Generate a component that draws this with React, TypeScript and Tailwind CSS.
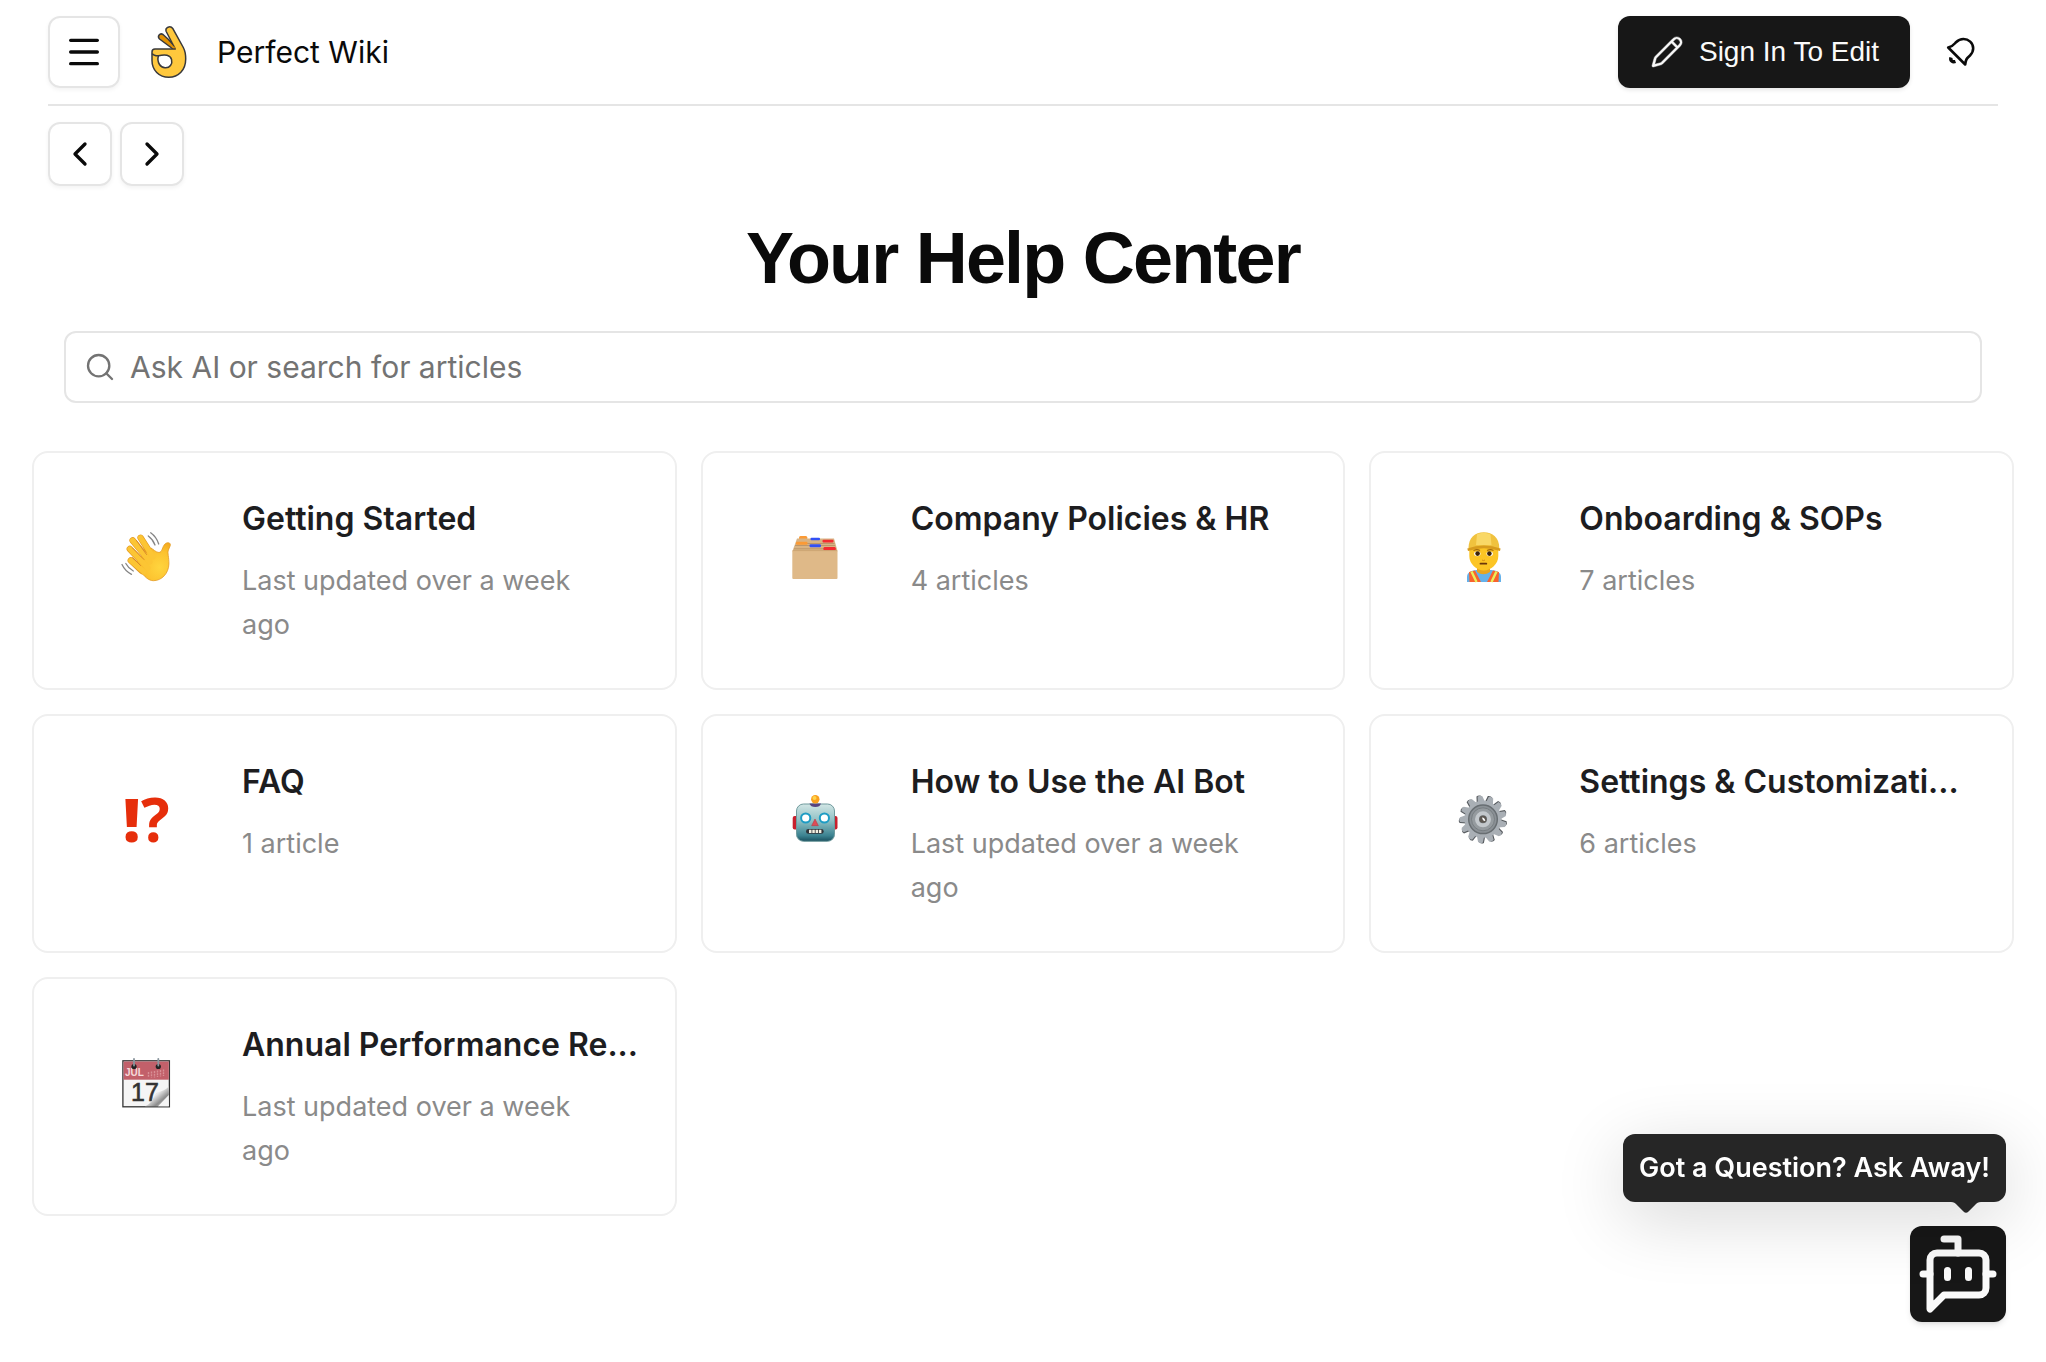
import type { ReactNode } from 'react';
import { ChevronLeft, ChevronRight, Menu, Search } from 'lucide-react';

interface Topic {
  title: string;
  note: string;
  icon: ReactNode;
}

function Emoji({ children }: { children: ReactNode }) {
  return (
    <svg viewBox="0 0 52 52" className="mt-9 size-[52px] shrink-0 overflow-visible" aria-hidden="true">
      {children}
    </svg>
  );
}

function WaveIcon() {
  return (
    <Emoji>
      <defs>
        <radialGradient id="skin" cx="0.7" cy="0.65" r="0.7">
          <stop offset="0" stopColor="#ffd53e" />
          <stop offset="0.6" stopColor="#fcc22f" />
          <stop offset="1" stopColor="#f3a81f" />
        </radialGradient>
      </defs>
      <g stroke="#e39a22" strokeLinecap="round" strokeWidth="6.4">
        <path d="M20.6 6.8 31 23M12.6 9.4 28 28M9.8 18 25 34M10.8 29.5 22 40" />
      </g>
      <path
        d="M20 40C25 46 28.5 49.7 33.5 49.7C42 49.7 48.7 42 48.9 33C49 26 47.3 22 48.4 19L50.3 14.5C51 11.5 47.3 10.8 45 13C42 16 42.5 21 39 21.5C36 21.5 33 18 31 17L14 33Z"
        fill="url(#skin)"
        stroke="#e39a22"
        strokeWidth="0.8"
      />
      <g stroke="#fcc534" strokeLinecap="round" strokeWidth="5.2">
        <path d="M20.6 6.8 33 26M12.6 9.4 30 31M9.8 18 28 37M10.8 29.5 24 41" />
      </g>
      <path
        d="M16.5 9.5 26.5 23.5M12.5 17 24 28.5M12.5 26.5 20.5 34.5"
        stroke="#d98b2b"
        strokeWidth="1"
        strokeLinecap="round"
      />
      <path
        d="M30.7 1.8Q36.5 6 38.7 13M28.3 5Q33 8.5 35 14M2 33.5Q5 40 11.5 43.3M5.8 32.5Q8.5 37.5 13.3 40"
        fill="none"
        stroke="#858585"
        strokeWidth="1.3"
        strokeLinecap="round"
      />
    </Emoji>
  );
}

function FolderIcon() {
  return (
    <Emoji>
      <rect x="10" y="5" width="8.3" height="4" rx="1.5" fill="#fb9a35" />
      <path d="M8 7.5H45L48.5 20H3.5Z" fill="#d8b384" />
      <rect x="21.5" y="6.7" width="9.5" height="2.6" rx="1" fill="#3250f5" />
      <rect x="33.5" y="8.8" width="11" height="2.8" rx="1" fill="#f32b31" />
      <path d="M7 12.5H45.500M6 14.5H46M5 17.8H47" stroke="#b99468" strokeWidth="0.9" />
      <rect x="7" y="10.7" width="11.5" height="3" rx="1.2" fill="#fb9a35" />
      <rect x="20.5" y="13.3" width="11.5" height="2.9" rx="1.2" fill="#3250f5" />
      <rect x="34.5" y="16" width="12.2" height="3.4" rx="1.2" fill="#f32b31" />
      <rect x="3.3" y="19.3" width="45.2" height="28.7" rx="1" fill="#dfb988" />
      <path d="M3.8 19.6H48" stroke="#c79f6e" strokeWidth="0.8" />
    </Emoji>
  );
}

function WorkerIcon() {
  return (
    <Emoji>
      <path d="M10 51V46C10 41 15 39.5 20 39H34C39 39.5 44 41 44 46V51Z" fill="#64b1ea" />
      <path d="M12 41 18 39.5 24 51H12.500ZM42 41 36 39.5 30 51H41.500Z" fill="#f8632d" />
      <path d="M14.5 40.5 19.5 51M39.5 40.5 34.5 51" stroke="#e9ef5a" strokeWidth="2.4" />
      <path d="M20 35H33V41Q26.5 45.5 20 41Z" fill="#e9a51f" />
      <path d="M12.3 17H41.3V25C41.3 33 34 39.5 26.8 39.5S12.3 33 12.3 25Z" fill="#fcc524" />
      <path d="M16.5 19.5Q20 17.8 23 19.5M30 19.5Q33.5 17.8 36.5 19.5" fill="none" stroke="#a36a0c" strokeWidth="1.2" />
      <ellipse cx="20.3" cy="22.8" rx="3.2" ry="2.4" fill="#fff" />
      <ellipse cx="32.7" cy="22.8" rx="3.2" ry="2.4" fill="#fff" />
      <circle cx="20.6" cy="22.6" r="2.3" fill="#3c2307" />
      <circle cx="32.4" cy="22.6" r="2.3" fill="#3c2307" />
      <path d="M25 29Q26.5 30.2 28 29" fill="none" stroke="#d58d18" strokeWidth="1" />
      <path d="M23.5 32.7H29.3" stroke="#6b370a" strokeWidth="1.8" strokeLinecap="round" />
      <path d="M11.5 17C11.5 7 18 1.3 26.8 1.3S42.3 7 42.3 17Z" fill="#f0c23e" />
      <path d="M20 3.5C22 1.5 31 1.5 33.5 3.5L34.5 14H19Z" fill="#f9d867" />
      <path d="M10.3 17.5Q26.8 11.5 43.6 17.5L43 20Q26.8 14.5 11 20Z" fill="#d79b1e" />
    </Emoji>
  );
}

function QuestionIcon() {
  return (
    <Emoji>
      <text x="3" y="48" fontSize="60" fontWeight="800" fill="#e62e0b" className="font-['Open_Sans',sans-serif]">
        !
      </text>
      <text x="21" y="48" fontSize="60" fontWeight="700" fill="#e62e0b" className="font-['Open_Sans',sans-serif]">
        ?
      </text>
    </Emoji>
  );
}

function RobotIcon() {
  return (
    <Emoji>
      <defs>
        <linearGradient id="steel" x1="0" y1="0" x2="0" y2="1">
          <stop offset="0" stopColor="#d2e6e5" />
          <stop offset="0.45" stopColor="#8fc0c4" />
          <stop offset="0.85" stopColor="#3b8290" />
          <stop offset="1" stopColor="#194f5e" />
        </linearGradient>
      </defs>
      <rect x="3.7" y="22" width="6" height="13.5" rx="2" fill="#c8202d" />
      <rect x="42.5" y="22" width="6" height="13.5" rx="2" fill="#c8202d" />
      <rect x="7.5" y="10" width="38" height="37.3" rx="7" fill="url(#steel)" stroke="#6f9a9d" strokeWidth="1" />
      <path d="M20.5 9.5H32Q31 13 26.3 13T20.5 9.5Z" fill="#57427f" />
      <circle cx="26.3" cy="5.2" r="4.2" fill="#f9a01f" />
      <circle cx="25.5" cy="4" r="2" fill="#ffd44a" />
      <circle cx="16.7" cy="24" r="4.6" fill="#fff" stroke="#1e9cc4" strokeWidth="2" />
      <circle cx="35.4" cy="24" r="4.6" fill="#fff" stroke="#1e9cc4" strokeWidth="2" />
      <path d="M26 25 29.3 31.7H22.7Z" fill="#df4c56" stroke="#b93843" strokeWidth="0.6" strokeLinejoin="round" />
      <rect x="17" y="35" width="17.7" height="4.8" rx="2.4" fill="#30343a" />
      <path d="M20 37.4H32.5" stroke="#f4efe0" strokeWidth="3.2" strokeDasharray="2.5 0.8" />
    </Emoji>
  );
}

const teeth = Array.from({ length: 13 }, (_, i) => (i * 360) / 13);

function GearIcon() {
  return (
    <Emoji>
      {teeth.map((angle) => (
        <g key={angle} transform={`rotate(${angle - 8} 26 25.3)`}>
          <path d="M22 9 22.7 1.8Q25 0.3 27.3 1.8L29.5 9Z" fill="#55595d" />
          <path d="M23 9.5 23.8 2.3Q26 0.8 28.6 2.3L30.8 9.5Z" fill="#a9afb5" />
        </g>
      ))}
      <circle cx="26" cy="25.3" r="18.5" fill="#a9afb5" />
      <circle cx="26" cy="25.3" r="14.3" fill="#8b9196" stroke="#686e72" strokeWidth="1.5" />
      <circle cx="26" cy="25.3" r="11.5" fill="#959b9f" stroke="#787e82" strokeWidth="1" />
      <circle cx="26" cy="25.3" r="6" fill="#6d7275" stroke="#c3c8cc" strokeWidth="4" />
      <circle cx="26" cy="25.3" r="3.5" fill="#5e5953" />
      <path d="M25 23.5Q28 23.5 28.3 27Q26 27.5 25 23.5Z" fill="#fff" />
    </Emoji>
  );
}

function CalendarIcon() {
  return (
    <Emoji>
      <defs>
        <linearGradient id="curl" x1="0" y1="0" x2="1" y2="1">
          <stop offset="0.2" stopColor="#777" />
          <stop offset="0.45" stopColor="#e8e8e8" />
          <stop offset="0.7" stopColor="#8d8d8d" />
          <stop offset="1" stopColor="#d5d5d5" />
        </linearGradient>
      </defs>
      <rect x="2.9" y="3.8" width="46.5" height="46" fill="#f5f5f5" stroke="#333" strokeWidth="1.3" />
      <rect x="3.6" y="4.5" width="45.2" height="18.2" fill="#c2606a" />
      <text x="5" y="19" fontSize="10" fontWeight="700" fill="#f6dada" className="font-['Liberation_Sans',sans-serif]">
        JUL
      </text>
      <path
        d="M28.5 15V20.5M31.5 14.5V20.5M34.5 14V20.5M37.5 13.5V20M40.5 13V19.5M43.5 12.5V19"
        stroke="#d88f95"
        strokeWidth="1.4"
        strokeDasharray="2 0.7"
      />
      <text x="11" y="44" fontSize="25" fill="#333" stroke="#333" strokeWidth="0.6" className="font-['Liberation_Sans',sans-serif]">
        17
      </text>
      <path d="M48.8 29C45 35 38 33.5 35 38C32 43 31 47 25 49.2H48.800Z" fill="url(#curl)" />
      <path d="M48.8 38 38 49.2H48.800Z" fill="#f5f5f5" />
      <circle cx="14" cy="9.5" r="2.6" fill="#222" />
      <circle cx="38.3" cy="9.5" r="2.6" fill="#222" />
      <path d="M14 1.8V8.5M38.3 1.8V8.5" stroke="#8a969e" strokeWidth="1.8" strokeLinecap="round" />
    </Emoji>
  );
}

function Logo() {
  return (
    <svg viewBox="0 0 36 54" className="h-[54px] w-9" aria-hidden="true">
      <g fill="#ffc83d" stroke="#39393b" strokeWidth="1.5" strokeLinejoin="round">
        <path d="M22 24 8.5 14C6 11.5 8.8 7.5 12 9.5L17.5 14.5L26 24Z" fill="#e19103" />
        <path
          d="M24.3 24 15.2 6.5C13.8 2.5 19.2 0 22 3.8L32.3 22.5C34.2 26 34.7 28 34.7 34C34.7 45 27.5 52.3 17.8 52.3C8 52.3 1 45 1 35.5V27C1 24.8 2 24 4 24ZM7.5 30.8C6.5 33.5 7 37 8.5 39.5C11 43.5 17 44 19.5 40.5C22 37 21 31.5 16 30.2C13.5 29.7 10.5 30 7.5 30.8Z"
          fillRule="evenodd"
        />
      </g>
      <path d="M10.5 11.5 22 23.2H25L19.5 13.5L24.5 23Z" fill="#e19103" />
      <path d="M1.3 28.5C2 30.5 4.5 30.8 7.5 30.8" fill="none" stroke="#39393b" strokeWidth="1.5" />
    </svg>
  );
}

function PencilIcon() {
  return (
    <svg viewBox="0 0 24 24" fill="currentColor" stroke="currentColor" strokeWidth="0.3" className="size-9" aria-hidden="true">
      <path d="M21.03 2.97a3.58 3.58 0 0 1 0 5.06L9.06 20a2.25 2.25 0 0 1-1 .58l-5.11 1.4a.75.75 0 0 1-.92-.93l1.4-5.11a2.25 2.25 0 0 1 .58-.99L15.97 2.97a3.58 3.58 0 0 1 5.06 0ZM15 6.06 5.06 16a.75.75 0 0 0-.19.33l-1.05 3.85 3.85-1.05A.75.75 0 0 0 8 18.94L17.94 9 15 6.06Zm2.03-2.03-.97.97L19 7.94l.97-.97a2.08 2.08 0 1 0-2.94-2.94Z" />
    </svg>
  );
}

function BellIcon() {
  return (
    <svg viewBox="0 0 30 30" fill="none" stroke="currentColor" strokeWidth="2.6" strokeLinejoin="round" className="size-[30px]" aria-hidden="true">
      <path d="M2.2 10.5C6.5 9.8 7.5 8 10 5.2C14.5.8 20.5 1.2 24.2 4.6S28.500 14 24 18.5C20.5 21.5 19.8 22.5 19.2 27.5Z" />
      <path d="M5 20.5C4 23.5 6.5 25.5 9.500 24.5" strokeWidth="3.4" />
    </svg>
  );
}

function BotIcon() {
  return (
    <svg
      viewBox="0 0 24 24"
      fill="none"
      stroke="currentColor"
      strokeWidth="2"
      strokeLinecap="round"
      strokeLinejoin="round"
      className="size-[84px]"
      aria-hidden="true"
    >
      <path d="M12 6V2H8" />
      <path d="m8 18-4 4V8a2 2 0 0 1 2-2h12a2 2 0 0 1 2 2v8a2 2 0 0 1-2 2Z" />
      <path d="M2 12h2M9 11v2M15 11v2M20 12h2" />
    </svg>
  );
}

const topics: Topic[] = [
  { title: 'Getting Started', note: 'Last updated over a week ago', icon: <WaveIcon /> },
  { title: 'Company Policies & HR', note: '4 articles', icon: <FolderIcon /> },
  { title: 'Onboarding & SOPs', note: '7 articles', icon: <WorkerIcon /> },
  { title: 'FAQ', note: '1 article', icon: <QuestionIcon /> },
  { title: 'How to Use the AI Bot', note: 'Last updated over a week ago', icon: <RobotIcon /> },
  { title: 'Settings & Customizati...', note: '6 articles', icon: <GearIcon /> },
  { title: 'Annual Performance Re...', note: 'Last updated over a week ago', icon: <CalendarIcon /> },
];

function TopicCard({ title, note, icon }: Topic) {
  return (
    <a href="#" className="flex gap-[70px] rounded-2xl border-2 border-[#efefef] bg-white pt-[42px] pr-6 pb-[41px] pl-[86px]">
      {icon}
      <div className="min-w-0 flex-1">
        <h2 className="truncate text-[32px] leading-[48px] font-semibold text-[#1d1d1f]">{title}</h2>
        <p className="mt-4 min-h-[88px] pr-10 text-[27px] leading-[44px] text-[#8a8a8a]">{note}</p>
      </div>
    </a>
  );
}

export default function App() {
  return (
    <div className="min-h-screen bg-white pb-12 font-['Inter',sans-serif] text-neutral-950">
      {/* Header */}
      <header className="mx-12 flex items-center justify-between border-b-2 border-neutral-200 py-4">
        <div className="flex items-center">
          <button
            type="button"
            aria-label="Open menu"
            className="flex size-[72px] items-center justify-center rounded-xl border-2 border-neutral-200 shadow-[0_2px_4px_rgba(0,0,0,0.05)]"
          >
            <Menu className="size-10" />
          </button>
          <a href="#" className="ml-[31px] flex items-center gap-[30px] text-[30px] leading-10">
            <Logo />
            Perfect Wiki
          </a>
        </div>
        <div className="flex items-center gap-9 pr-[22px]">
          <button
            type="button"
            className="flex h-[72px] items-center gap-3.5 rounded-xl bg-neutral-900 px-[31px] font-['Liberation_Sans',sans-serif] text-[28px] text-neutral-50 shadow-[0_2px_4px_rgba(0,0,0,0.1)]"
          >
            <PencilIcon />
            Sign In To Edit
          </button>
          <button type="button" aria-label="Notifications">
            <BellIcon />
          </button>
        </div>
      </header>

      {/* History buttons */}
      <nav className="mx-12 flex gap-2 pt-4" aria-label="History">
        <button
          type="button"
          aria-label="Back"
          className="flex size-16 items-center justify-center rounded-xl border-2 border-neutral-200 shadow-[0_2px_4px_rgba(0,0,0,0.05)]"
        >
          <ChevronLeft className="size-10" />
        </button>
        <button
          type="button"
          aria-label="Forward"
          className="flex size-16 items-center justify-center rounded-xl border-2 border-neutral-200 shadow-[0_2px_4px_rgba(0,0,0,0.05)]"
        >
          <ChevronRight className="size-10" />
        </button>
      </nav>

      <main>
        <h1 className="mt-9 text-center font-['Liberation_Sans',sans-serif] text-7xl font-bold tracking-tight">
          Your Help Center
        </h1>

        <label className="mx-16 mt-[37px] flex h-[72px] items-center gap-3.5 rounded-xl border-2 border-neutral-200 px-[18px] text-neutral-500">
          <Search className="size-8 shrink-0" strokeWidth={1.75} />
          <input
            type="search"
            aria-label="Search"
            placeholder="Ask AI or search for articles"
            className="min-w-0 flex-1 text-[30px] leading-10 outline-none placeholder:text-neutral-500"
          />
        </label>

        <div className="mx-8 mt-12 grid grid-cols-3 gap-6">
          {topics.map((topic) => (
            <TopicCard key={topic.title} {...topic} />
          ))}
        </div>
      </main>

      {/* Chat launcher */}
      <div className="fixed right-10 bottom-10 flex flex-col items-end gap-6">
        <div className="relative rounded-xl bg-[#262626] px-4 py-3.5 text-[27px] leading-10 font-semibold text-white shadow-[0_16px_70px_rgba(0,0,0,0.16)]">
          Got a Question? Ask Away!
          <svg viewBox="0 0 30 11" className="absolute top-full right-[25px] h-[11px] w-[30px] fill-[#262626]" aria-hidden="true">
            <path d="M0 0C3 0 4 1 5.5 2.5L12.5 9.5Q15 12 17.5 9.5L24.5 2.5C26 1 27 0 30 0Z" />
          </svg>
        </div>
        <button
          type="button"
          aria-label="Open chat"
          className="flex size-24 items-center justify-center rounded-xl bg-neutral-900 text-neutral-50 shadow-md"
        >
          <BotIcon />
        </button>
      </div>
    </div>
  );
}
